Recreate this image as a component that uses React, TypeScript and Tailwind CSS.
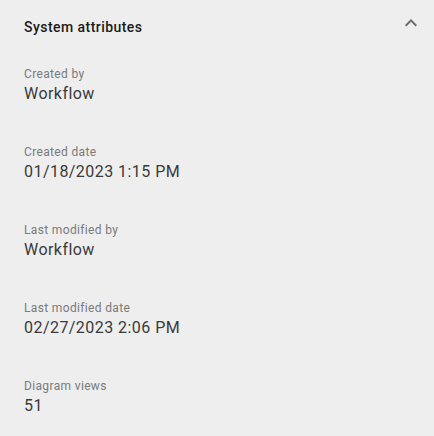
const attributes = [
  { label: "Created by", value: "Workflow" },
  { label: "Created date", value: "01/18/2023 1:15 PM" },
  { label: "Last modified by", value: "Workflow" },
  { label: "Last modified date", value: "02/27/2023 2:06 PM" },
  { label: "Diagram views", value: "51" },
];

function ExpandLess() {
  return (
    <svg width="24" height="24" viewBox="0 0 24 24" fill="#6b6b6b">
      <path d="M12 8l-6 6 1.41 1.41L12 10.83l4.59 4.58L18 14z" />
    </svg>
  );
}

export default function App() {
  return (
    <div
      className="w-[434px] h-[436px] bg-[#eeeeee] pl-6 pr-[11px] pt-[17px]"
      style={{ fontFamily: "Roboto, 'Liberation Sans', sans-serif" }}
    >
      <div className="flex items-center justify-between h-5">
        <span className="text-[14px] leading-5 font-medium text-[#1a1a1a] tracking-[0.45px]">
          System attributes
        </span>
        <button type="button" className="-mt-2">
          <ExpandLess />
        </button>
      </div>

      <div className="mt-[29px] flex flex-col gap-[38px]">
        {attributes.map((attr) => (
          <div key={attr.label} className="flex flex-col">
            <span className="text-[12px] leading-4 text-[#7a7a7a] tracking-[0.35px]">
              {attr.label}
            </span>
            <span className="text-[16px] leading-6 text-[#3a3a3a] tracking-[0.45px]">
              {attr.value}
            </span>
          </div>
        ))}
      </div>
    </div>
  );
}
